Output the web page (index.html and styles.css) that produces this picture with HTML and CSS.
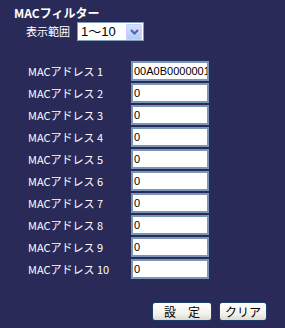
FILE: index.html
```html
<!DOCTYPE html>
<html lang="ja">
<head>
<meta charset="utf-8">
<link rel="stylesheet" href="styles.css">
</head>
<body>
<div class="page">
  <div class="title">MACフィルター</div>
  <div class="range">
    <span class="range-label">表示範囲</span>
    <div class="select">
      <span class="select-value">1〜10</span>
      <span class="select-btn">
        <svg width="9" height="6" viewBox="0 0 9 6"><path d="M1 1 L4.5 4.5 L8 1" fill="none" stroke="#4d61a8" stroke-width="2"/></svg>
      </span>
    </div>
  </div>
  <div class="rows">
    <span class="lbl">MACアドレス 1</span><div class="inp">00A0B0000001</div>
    <span class="lbl">MACアドレス 2</span><div class="inp">0</div>
    <span class="lbl">MACアドレス 3</span><div class="inp">0</div>
    <span class="lbl">MACアドレス 4</span><div class="inp">0</div>
    <span class="lbl">MACアドレス 5</span><div class="inp">0</div>
    <span class="lbl">MACアドレス 6</span><div class="inp">0</div>
    <span class="lbl">MACアドレス 7</span><div class="inp">0</div>
    <span class="lbl">MACアドレス 8</span><div class="inp">0</div>
    <span class="lbl">MACアドレス 9</span><div class="inp">0</div>
    <span class="lbl">MACアドレス 10</span><div class="inp">0</div>
  </div>
  <div class="buttons">
    <button class="btn btn-set">設　定</button>
    <button class="btn btn-clear">クリア</button>
  </div>
</div>
</body>
</html>
```
FILE: styles.css
```css
html, body {
  margin: 0;
  padding: 0;
  background: #2a2a58;
}
.page {
  width: 285px;
  height: 328px;
  background: #2a2a58;
  color: #ffffff;
  font-family: "Noto Sans CJK JP", "Noto Sans", sans-serif;
  overflow: hidden;
}
.title {
  margin: 6px 0 0 14px;
  height: 14px;
  line-height: 14px;
  font-size: 12px;
  font-weight: bold;
}
.range {
  display: flex;
  align-items: center;
  margin: 2px 0 0 26px;
  gap: 7px;
  height: 19px;
}
.range-label {
  font-size: 11px;
  line-height: 19px;
}
.select {
  display: flex;
  align-items: center;
  width: 65px;
  height: 17px;
  border: 1px solid #7f9db9;
  background: #ffffff;
  color: #000000;
}
.select-value {
  flex: 1;
  padding-left: 3px;
  font-family: "Liberation Sans", "Noto Sans CJK JP", sans-serif;
  font-size: 13px;
  line-height: 17px;
}
.select-btn {
  display: flex;
  align-items: center;
  justify-content: center;
  width: 16px;
  height: 16px;
  margin-right: 1px;
  border-radius: 2px;
  background: linear-gradient(#d6e2fc, #b4c8f6);
  box-shadow: inset 0 0 0 1px #c3d3fd;
}
.rows {
  display: grid;
  grid-template-columns: 103px 78px;
  grid-auto-rows: 20px;
  row-gap: 2px;
  margin: 20px 0 0 28px;
  align-items: center;
}
.lbl {
  font-size: 11px;
  line-height: 20px;
  white-space: nowrap;
}
.inp {
  box-sizing: border-box;
  width: 78px;
  height: 20px;
  border: 2px solid #7b97b8;
  background: #ffffff;
  color: #000000;
  font-family: "Liberation Sans", Arial, sans-serif;
  font-size: 11px;
  line-height: 16px;
  padding-left: 1px;
  overflow: hidden;
  white-space: nowrap;
}
.buttons {
  display: flex;
  gap: 7px;
  margin: 23px 0 0 152px;
}
.btn {
  box-sizing: border-box;
  height: 19px;
  padding: 0;
  border: 1px solid #1e3d6b;
  border-radius: 3px;
  background: linear-gradient(#ffffff, #f4f3ee 60%, #dcdad0);
  color: #000000;
  font-family: "Noto Sans CJK JP", sans-serif;
  font-size: 12px;
  line-height: 17px;
}
.btn-set { width: 60px; }
.btn-clear { width: 48px; }
```
